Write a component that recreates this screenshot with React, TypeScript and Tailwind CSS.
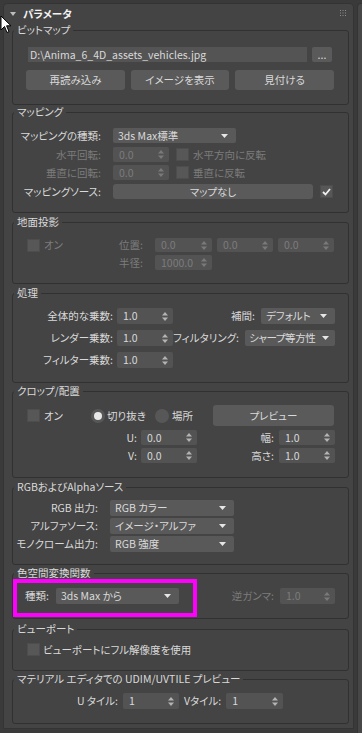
import type { ReactNode } from "react"

const txt = "text-[#d9d9d9]"
const dim = "text-[#7c7c7c]"

function Arrows({ disabled }: { disabled?: boolean }) {
  return (
    <svg width="6" height="9" viewBox="0 0 6 9" className="shrink-0">
      <path d="M3 0 L6 3.5 H0 Z M3 9 L6 5.5 H0 Z" fill={disabled ? "#7a7a7a" : "#b4b4b4"} />
    </svg>
  )
}

function Spinner({ w, value, disabled, h = "h-[15px]" }: { w: string; value: string; disabled?: boolean; h?: string }) {
  return (
    <div className={`${w} ${h} shrink-0 flex items-center justify-between pl-[6px] pr-[5px] rounded-[2px] bg-[#535353]`}>
      <span className={disabled ? dim : txt}>{value}</span>
      <Arrows disabled={disabled} />
    </div>
  )
}

function Dropdown({ w, value, h = "h-[15px]", tight }: { w: string; value: string; h?: string; tight?: boolean }) {
  return (
    <div
      className={`${w} ${h} shrink-0 flex items-center justify-between rounded-[2px] bg-[#595959] ${tight ? "pl-[4px] pr-[6px]" : "pl-[5px] pr-[8px]"}`}
    >
      <span className={`min-w-0 ${tight ? "tracking-[-0.4px]" : ""} ${txt}`}>{value}</span>
      <svg width="7" height="4" viewBox="0 0 7 4" className="shrink-0 ml-[2px]">
        <path d="M0 0 H7 L3.5 4 Z" fill="#e6e6e6" />
      </svg>
    </div>
  )
}

function Btn({ w, h, children }: { w: string; h: string; children: ReactNode }) {
  return (
    <div className={`${w} ${h} shrink-0 flex items-center justify-center rounded-[3px] bg-[#5a5a5a] ${txt}`}>
      {children}
    </div>
  )
}

function Check({ checked }: { checked?: boolean }) {
  return (
    <div className="w-[13px] h-[13px] shrink-0 flex items-center justify-center bg-[#575757] border border-[#4d4d4d]">
      {checked && (
        <svg width="9" height="8" viewBox="0 0 9 8">
          <path d="M1 4 L3.5 6.5 L8 1" stroke="#f0f0f0" strokeWidth="1.8" fill="none" />
        </svg>
      )}
    </div>
  )
}

function Radio({ on }: { on?: boolean }) {
  return (
    <div className="w-[14px] h-[14px] shrink-0 rounded-full bg-[#575757] flex items-center justify-center">
      {on && <div className="w-[8px] h-[8px] rounded-full bg-[#e8e8e8]" />}
    </div>
  )
}

function Group({ label, pad, mt = "mt-0", children }: { label: string; pad: string; mt?: string; children: ReactNode }) {
  return (
    <fieldset className={`border border-[#313131] rounded-[3px] ${mt}`}>
      <legend className={`ml-[1px] px-[3px] leading-[14px] ${txt}`}>{label}</legend>
      <div className={pad}>{children}</div>
    </fieldset>
  )
}

export default function App() {
  return (
    <div className="relative w-[362px] h-[733px] overflow-hidden whitespace-nowrap bg-[#3a3a3a] flex text-[10.5px] leading-[14px] [font-family:'Noto_Sans_CJK_JP',sans-serif] [font-feature-settings:'palt']">
      {/* ロールアウト */}
      <div className="mt-[3px] ml-[3px] w-[351px] h-[726px] border border-[#343434] rounded-t-[4px] bg-[#444444] flex flex-col">
        <div className="h-[19px] shrink-0 flex items-center pl-[6px] pr-[7px]">
          <svg width="6" height="4" viewBox="0 0 6 4">
            <path d="M0 0 H6 L3 4 Z" fill="#bdbdbd" />
          </svg>
          <span className="ml-[7px] font-bold text-[#f2f2f2]">パラメータ</span>
          <svg width="6" height="6" viewBox="0 0 6 6" className="ml-auto mb-[2px]">
            {[0, 2.5, 5].map((x) =>
              [0, 2.5, 5].map((y) => <rect key={`${x}-${y}`} x={x} y={y} width="1" height="1" fill="#8c8c8c" />),
            )}
          </svg>
        </div>

        <div className="pl-[8px] pr-[4px] flex flex-col">
          {/* ビットマップ */}
          <Group label="ビットマップ" pad="pl-[13px] pr-[13px] pt-[10px] pb-[14px]">
            <div className="flex items-center">
              <div className={`ml-[2px] w-[279px] h-[15px] flex items-center pl-[2px] bg-[#545454] ${txt}`}>
                D:\Anima_6_4D_assets_vehicles.jpg
              </div>
              <div className={`ml-[5px] w-[20px] h-[15px] flex items-center justify-center rounded-[2px] bg-[#5a5a5a] ${txt}`}>
                ...
              </div>
            </div>
            <div className="mt-[8px] flex gap-[6px]">
              <Btn w="w-[99px]" h="h-[20px]">再読み込み</Btn>
              <Btn w="w-[98px]" h="h-[20px]">イメージを表示</Btn>
              <Btn w="w-[99px]" h="h-[20px]">見付ける</Btn>
            </div>
          </Group>

          {/* マッピング */}
          <Group label="マッピング" pad="pt-[9px] pb-[13px]">
            <div className="flex items-center h-[15px]">
              <span className={`w-[88px] text-right ${txt}`}>マッピングの種類:</span>
              <div className="ml-[12px]">
                <Dropdown w="w-[123px]" value="3ds Max標準" />
              </div>
            </div>
            <div className="mt-[4px] flex items-center h-[15px]">
              <span className={`w-[88px] text-right ${dim}`}>水平回転:</span>
              <div className="ml-[12px]">
                <Spinner w="w-[56px]" value="0.0" disabled />
              </div>
              <div className="ml-[7px]">
                <Check />
              </div>
              <span className={`ml-[4px] ${dim}`}>水平方向に反転</span>
            </div>
            <div className="mt-[3px] flex items-center h-[15px]">
              <span className={`w-[88px] text-right ${dim}`}>垂直に回転:</span>
              <div className="ml-[12px]">
                <Spinner w="w-[56px]" value="0.0" disabled />
              </div>
              <div className="ml-[7px]">
                <Check />
              </div>
              <span className={`ml-[4px] ${dim}`}>垂直に反転</span>
            </div>
            <div className="mt-[4px] flex items-center h-[15px]">
              <span className={`w-[88px] text-right ${txt}`}>マッピングソース:</span>
              <div className="ml-[12px]">
                <Btn w="w-[200px]" h="h-[15px]">マップなし</Btn>
              </div>
              <div className="ml-[7px]">
                <Check checked />
              </div>
            </div>
          </Group>

          {/* 地面投影 */}
          <Group label="地面投影" mt="mt-[2px]" pad="pt-[9px] pb-[13px] pr-[13px]">
            <div className="flex items-center h-[14px]">
              <div className="w-[130px] pl-[14px] flex items-center">
                <Check />
                <span className={`ml-[4px] ${dim}`}>オン</span>
                <span className={`ml-auto ${dim}`}>位置:</span>
              </div>
              <div className="ml-[12px] flex gap-[5px]">
                <Spinner w="w-[57px]" h="h-[14px]" value="0.0" disabled />
                <Spinner w="w-[56px]" h="h-[14px]" value="0.0" disabled />
                <Spinner w="w-[56px]" h="h-[14px]" value="0.0" disabled />
              </div>
            </div>
            <div className="mt-[3px] flex items-center h-[15px]">
              <span className={`w-[130px] text-right ${dim}`}>半径:</span>
              <div className="ml-[12px]">
                <Spinner w="w-[57px]" value="1000.0" disabled />
              </div>
            </div>
          </Group>

          {/* 処理 */}
          <Group label="処理" mt="mt-[2px]" pad="pt-[8px] pb-[14px] pr-[13px] flex flex-col gap-[6px]">
            <div className="flex items-center h-[16px]">
              <span className={`w-[100px] text-right ${txt}`}>全体的な乗数:</span>
              <div className="ml-[4px]">
                <Spinner w="w-[56px]" h="h-[16px]" value="1.0" />
              </div>
              <span className={`flex-1 text-right ${txt}`}>補間:</span>
              <div className="ml-[6px]">
                <Dropdown w="w-[74px]" h="h-[16px]" value="デフォルト" />
              </div>
            </div>
            <div className="flex items-center h-[16px]">
              <span className={`w-[100px] text-right ${txt}`}>レンダー乗数:</span>
              <div className="ml-[4px]">
                <Spinner w="w-[56px]" h="h-[16px]" value="1.0" />
              </div>
              <span className={`flex-1 text-right ${txt}`}>フィルタリング:</span>
              <div className="ml-[6px]">
                <Dropdown w="w-[90px]" h="h-[16px]" value="シャープ等方性" tight />
              </div>
            </div>
            <div className="flex items-center h-[16px]">
              <span className={`w-[100px] text-right ${txt}`}>フィルター乗数:</span>
              <div className="ml-[4px]">
                <Spinner w="w-[56px]" h="h-[16px]" value="1.0" />
              </div>
            </div>
          </Group>

          {/* クロップ/配置 */}
          <Group label="クロップ/配置" mt="mt-[1px]" pad="pt-[7px] pb-[14px] pr-[13px]">
            <div className="flex items-center h-[21px]">
              <div className="w-[78px] pl-[14px] flex items-center">
                <Check />
                <span className={`ml-[4px] ${txt}`}>オン</span>
              </div>
              <div className="w-[64px] flex items-center">
                <Radio on />
                <span className={`ml-[2px] ${txt}`}>切り抜き</span>
              </div>
              <div className="w-[58px] flex items-center">
                <Radio />
                <span className={`ml-[3px] ${txt}`}>場所</span>
              </div>
              <Btn w="w-[121px]" h="h-[21px]">プレビュー</Btn>
            </div>
            <div className="mt-[4px] flex items-center h-[15px]">
              <span className={`w-[124px] text-right ${txt}`}>U:</span>
              <div className="ml-[4px]">
                <Spinner w="w-[56px]" value="0.0" />
              </div>
              <span className={`flex-1 text-right ${txt}`}>幅:</span>
              <div className="ml-[5px]">
                <Spinner w="w-[56px]" value="1.0" />
              </div>
            </div>
            <div className="mt-[3px] flex items-center h-[15px]">
              <span className={`w-[124px] text-right ${txt}`}>V:</span>
              <div className="ml-[4px]">
                <Spinner w="w-[56px]" value="0.0" />
              </div>
              <span className={`flex-1 text-right ${txt}`}>高さ:</span>
              <div className="ml-[5px]">
                <Spinner w="w-[56px]" value="1.0" />
              </div>
            </div>
          </Group>

          {/* RGBおよびAlphaソース */}
          <Group label="RGBおよびAlphaソース" mt="mt-[2px]" pad="pt-[6px] pb-[12px] flex flex-col gap-[2px]">
            {[
              ["RGB 出力:", "RGB カラー"],
              ["アルファソース:", "イメージ・アルファ"],
              ["モノクローム出力:", "RGB 強度"],
            ].map(([l, v]) => (
              <div key={l} className="flex items-center h-[16px]">
                <span className={`w-[85px] text-right ${txt}`}>{l}</span>
                <div className="ml-[12px]">
                  <Dropdown w="w-[124px]" h="h-[16px]" value={v} />
                </div>
              </div>
            ))}
          </Group>

          {/* 色空間変換関数 */}
          <Group label="色空間変換関数" mt="mt-[1px]" pad="pt-[8px] pb-[14px] pr-[13px]">
            <div className="relative flex items-center h-[16px]">
              <span className={`ml-[12px] ${txt}`}>種類:</span>
              <div className="ml-[7px]">
                <Dropdown w="w-[123px]" h="h-[16px]" value="3ds Max から" />
              </div>
              <span className={`flex-1 text-right ${dim}`}>逆ガンマ:</span>
              <div className="ml-[6px]">
                <Spinner w="w-[55px]" h="h-[16px]" value="1.0" disabled />
              </div>
              {/* ハイライト枠 */}
              <div className="absolute left-0 top-[-9px] w-[184px] h-[38px] border-[4px] border-[#ff00ff]" />
            </div>
          </Group>

          {/* ビューポート */}
          <Group label="ビューポート" mt="mt-[3px]" pad="pt-[7px] pb-[14px]">
            <div className="flex items-center h-[13px] pl-[14px]">
              <Check />
              <span className={`ml-[3px] ${txt}`}>ビューポートにフル解像度を使用</span>
            </div>
          </Group>

          {/* UDIM/UVTILE */}
          <Group label="マテリアル エディタでの UDIM/UVTILE プレビュー" mt="mt-[1px]" pad="pt-[7px] pb-[14px]">
            <div className="flex items-center h-[16px]">
              <span className={`w-[105px] text-right ${txt}`}>U タイル:</span>
              <div className="ml-[5px]">
                <Spinner w="w-[56px]" h="h-[16px]" value="1" />
              </div>
              <span className={`ml-[5px] ${txt}`}>Vタイル:</span>
              <div className="ml-[5px]">
                <Spinner w="w-[57px]" h="h-[16px]" value="1" />
              </div>
            </div>
          </Group>
        </div>
      </div>

      {/* 右のスクロール帯 */}
      <div className="mt-[3px] ml-[3px] flex-1 h-[730px] border-l border-t border-[#343434] rounded-tl-[4px] bg-[#474747]" />

      {/* マウスカーソル */}
      <svg width="12" height="19" viewBox="0 0 12 19" className="absolute left-0 top-[15px]">
        <path d="M1 1 L1 15 L4.5 11.5 L7 17.5 L9 16.6 L6.6 10.8 L11 10.8 Z" fill="#ffffff" stroke="#000000" strokeWidth="1" />
      </svg>
    </div>
  )
}
